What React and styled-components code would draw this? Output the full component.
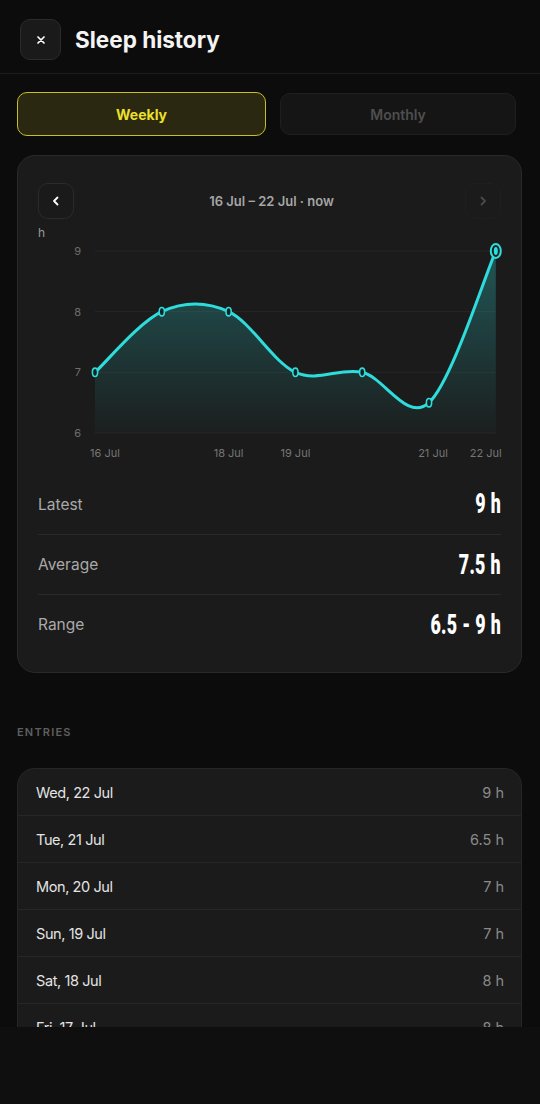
import React from "react";
import styled, { createGlobalStyle } from "styled-components";

const GlobalStyle = createGlobalStyle`
  * { box-sizing: border-box; }
  body {
    margin: 0;
    background: #0c0c0c;
    font-family: Inter, "Noto Sans", sans-serif;
    color: #f2f2f2;
  }
`;

const Screen = styled.div`
  width: 540px;
  height: 1104px;
  display: flex;
  flex-direction: column;
  background: #0c0c0c;
`;

const Scroll = styled.div`
  height: 1027px;
  overflow: hidden;
`;

const BottomBar = styled.div`
  flex: 1;
  background: #0f0f0f;
`;

const Header = styled.header`
  height: 74px;
  display: flex;
  align-items: flex-start;
  gap: 14px;
  padding: 19px 20px 0;
  border-bottom: 1px solid #1c1c1c;
`;

const IconButton = styled.button`
  width: ${(p) => p.size}px;
  height: ${(p) => p.size}px;
  flex-shrink: 0;
  display: flex;
  align-items: center;
  justify-content: center;
  padding: 0;
  border-radius: 10px;
  background: ${(p) => (p.faint ? "transparent" : "#1a1a1a")};
  border: 1px solid ${(p) => (p.faint ? "#1f1f1f" : "#2b2b2b")};
  color: ${(p) => (p.faint ? "#4a4a4a" : "#ffffff")};
  cursor: pointer;
`;

const Title = styled.h1`
  margin: 0;
  line-height: 42px;
  font-size: 22.5px;
  font-weight: 700;
  color: #f4f4f4;
`;

const Tabs = styled.div`
  display: flex;
  gap: 14px;
  padding: 18px 24px 0 17px;
  align-items: center;
`;

const Tab = styled.button`
  height: ${(p) => (p.active ? 44 : 42)}px;
  flex: ${(p) => (p.active ? "0 0 249px" : "1")};
  border-radius: 10px;
  font-family: Inter, sans-serif;
  font-size: 14px;
  font-weight: ${(p) => (p.active ? 700 : 600)};
  background: ${(p) => (p.active ? "#2a2810" : "#151515")};
  border: ${(p) => (p.active ? "1.5px solid #c8bd2a" : "1px solid #1f1f1f")};
  color: ${(p) => (p.active ? "#ece02e" : "#4e4e4e")};
`;

const Card = styled.section`
  margin: 19px 18px 0 17px;
  background: #1b1b1b;
  border: 1px solid #2a2a2a;
  border-radius: 18px;
  padding: 27px 20px 18px 20px;
`;

const NavRow = styled.div`
  display: flex;
  align-items: center;
  justify-content: space-between;
`;

const RangeLabel = styled.div`
  font-size: 13px;
  font-weight: 600;
  color: #a6a6a6;
  padding-left: 4px;
`;

const ChartSvg = styled.svg`
  display: block;
  margin-top: 6px;
  overflow: visible;
`;

const Stats = styled.div`
  margin-top: 9px;
`;

const StatRow = styled.div`
  height: 60px;
  display: flex;
  align-items: center;
  justify-content: space-between;
  border-top: ${(p) => (p.first ? "none" : "1px solid #292929")};
`;

const StatLabel = styled.span`
  font-size: 15.5px;
  color: #a9a9a9;
`;

const StatValue = styled.span`
  font-family: Roboto, "Liberation Sans", sans-serif;
  font-size: 27px;
  font-weight: 900;
  color: #ffffff;
  letter-spacing: 0.5px;
  transform: scaleX(0.66);
  transform-origin: right center;
  white-space: nowrap;
`;

const SectionLabel = styled.div`
  margin: 52px 0 0 17px;
  font-size: 11px;
  font-weight: 600;
  letter-spacing: 1.2px;
  color: #5f5f5f;
`;

const List = styled.div`
  margin: 29px 18px 0 17px;
  background: #1b1b1b;
  border: 1px solid #262626;
  border-bottom: none;
  border-radius: 18px 18px 0 0;
`;

const Entry = styled.div`
  height: ${(p) => (p.first ? 46 : 47)}px;
  display: flex;
  align-items: center;
  justify-content: space-between;
  padding: 0 17px 0 18px;
  border-top: ${(p) => (p.first ? "none" : "1px solid #262626")};
`;

const EntryDate = styled.span`
  font-size: 14.5px;
  color: #e4e4e4;
  letter-spacing: -0.4px;
`;

const EntryValue = styled.span`
  font-size: 14.5px;
  color: #8a8a8a;
`;

const Chevron = ({ dir }) => (
  <svg width="14" height="14" viewBox="0 0 14 14" fill="none">
    <path
      d={dir === "left" ? "M8.5 3.5 5 7l3.5 3.5" : "M5.5 3.5 9 7l-3.5 3.5"}
      stroke="currentColor"
      strokeWidth="1.8"
      strokeLinecap="round"
      strokeLinejoin="round"
    />
  </svg>
);

const data = [7, 8, 8, 7, 7, 6.5, 9];
const xLabels = { 0: "16 Jul", 2: "18 Jul", 3: "19 Jul", 5: "21 Jul", 6: "22 Jul" };
const X0 = 57;
const STEP = 66.8;
const yOf = (v) => 208 - (v - 6) * 60.67;

function buildPath(pts) {
  let d = `M${pts[0][0]},${pts[0][1]}`;
  for (let i = 0; i < pts.length - 1; i++) {
    const p0 = pts[i - 1] || pts[i];
    const p1 = pts[i];
    const p2 = pts[i + 1];
    const p3 = pts[i + 2] || p2;
    const c1x = p1[0] + (p2[0] - p0[0]) / 6;
    const c1y = p1[1] + (p2[1] - p0[1]) / 6;
    const c2x = p2[0] - (p3[0] - p1[0]) / 6;
    const c2y = p2[1] - (p3[1] - p1[1]) / 6;
    d += ` C${c1x},${c1y} ${c2x},${c2y} ${p2[0]},${p2[1]}`;
  }
  return d;
}

function Chart() {
  const pts = data.map((v, i) => [X0 + i * STEP, yOf(v)]);
  const line = buildPath(pts);
  const last = pts[pts.length - 1];
  const area = `${line} L${last[0]},208 L${pts[0][0]},208 Z`;
  return (
    <ChartSvg width="464" height="240" viewBox="0 0 464 240">
      <defs>
        <linearGradient id="fill" x1="0" y1="0" x2="0" y2="1">
          <stop offset="0%" stopColor="#2fd3d3" stopOpacity="0.32" />
          <stop offset="100%" stopColor="#2fd3d3" stopOpacity="0.02" />
        </linearGradient>
      </defs>
      <text x="0" y="12" fill="#9a9a9a" fontSize="12" fontFamily="Inter, sans-serif">
        h
      </text>
      {[9, 8, 7, 6].map((v) => (
        <g key={v}>
          <line x1={X0} x2={458} y1={yOf(v)} y2={yOf(v)} stroke="#262626" strokeWidth="1" />
          <text
            x="43"
            y={yOf(v) + 4}
            textAnchor="end"
            fill="#6e6e6e"
            fontSize="11"
            fontFamily="Inter, sans-serif"
          >
            {v}
          </text>
        </g>
      ))}
      <path d={area} fill="url(#fill)" />
      <path d={line} fill="none" stroke="#2fdcdc" strokeWidth="3" strokeLinecap="round" />
      {pts.slice(0, -1).map(([x, y], i) => (
        <ellipse key={i} cx={x} cy={y} rx="2.6" ry="4.2" fill="#152222" stroke="#2fdcdc" strokeWidth="1.6" />
      ))}
      <ellipse cx={last[0]} cy={last[1]} rx="5" ry="7" fill="#152222" stroke="#2fdcdc" strokeWidth="2" />
      <ellipse cx={last[0]} cy={last[1]} rx="2" ry="4" fill="#2fdcdc" />
      {Object.entries(xLabels).map(([i, label]) => {
        const idx = Number(i);
        const x = X0 + idx * STEP;
        const anchor = idx === 0 ? "start" : idx === data.length - 1 ? "end" : "middle";
        const dx = idx === 0 ? -5 : idx === data.length - 1 ? 6 : idx === 5 ? 4 : 0;
        return (
          <text
            key={i}
            x={x + dx}
            y="232"
            textAnchor={anchor}
            fill="#767676"
            fontSize="11"
            fontFamily="Inter, sans-serif"
          >
            {label}
          </text>
        );
      })}
    </ChartSvg>
  );
}

const stats = [
  { label: "Latest", value: "9 h" },
  { label: "Average", value: "7.5 h" },
  { label: "Range", value: "6.5 - 9 h" },
];

const entries = [
  ["Wed, 22 Jul", "9 h"],
  ["Tue, 21 Jul", "6.5 h"],
  ["Mon, 20 Jul", "7 h"],
  ["Sun, 19 Jul", "7 h"],
  ["Sat, 18 Jul", "8 h"],
  ["Fri, 17 Jul", "8 h"],
  ["Thu, 16 Jul", "7 h"],
];

export default function App() {
  return (
    <>
      <GlobalStyle />
      <Screen>
        <Scroll>
          <Header>
            <IconButton size={41}>
              <svg width="12" height="12" viewBox="0 0 12 12">
                <path d="M3 3l6 6M9 3l-6 6" stroke="#fff" strokeWidth="1.7" strokeLinecap="round" />
              </svg>
            </IconButton>
            <Title>Sleep history</Title>
          </Header>

          <Tabs>
            <Tab active>Weekly</Tab>
            <Tab>Monthly</Tab>
          </Tabs>

          <Card>
            <NavRow>
              <IconButton size={36}>
                <Chevron dir="left" />
              </IconButton>
              <RangeLabel>16 Jul – 22 Jul · now</RangeLabel>
              <IconButton size={36} faint>
                <Chevron dir="right" />
              </IconButton>
            </NavRow>
            <Chart />
            <Stats>
              {stats.map((s, i) => (
                <StatRow key={s.label} first={i === 0}>
                  <StatLabel>{s.label}</StatLabel>
                  <StatValue>{s.value}</StatValue>
                </StatRow>
              ))}
            </Stats>
          </Card>

          <SectionLabel>ENTRIES</SectionLabel>
          <List>
            {entries.map(([d, v], i) => (
              <Entry key={d} first={i === 0}>
                <EntryDate>{d}</EntryDate>
                <EntryValue>{v}</EntryValue>
              </Entry>
            ))}
          </List>
        </Scroll>
        <BottomBar />
      </Screen>
    </>
  );
}
